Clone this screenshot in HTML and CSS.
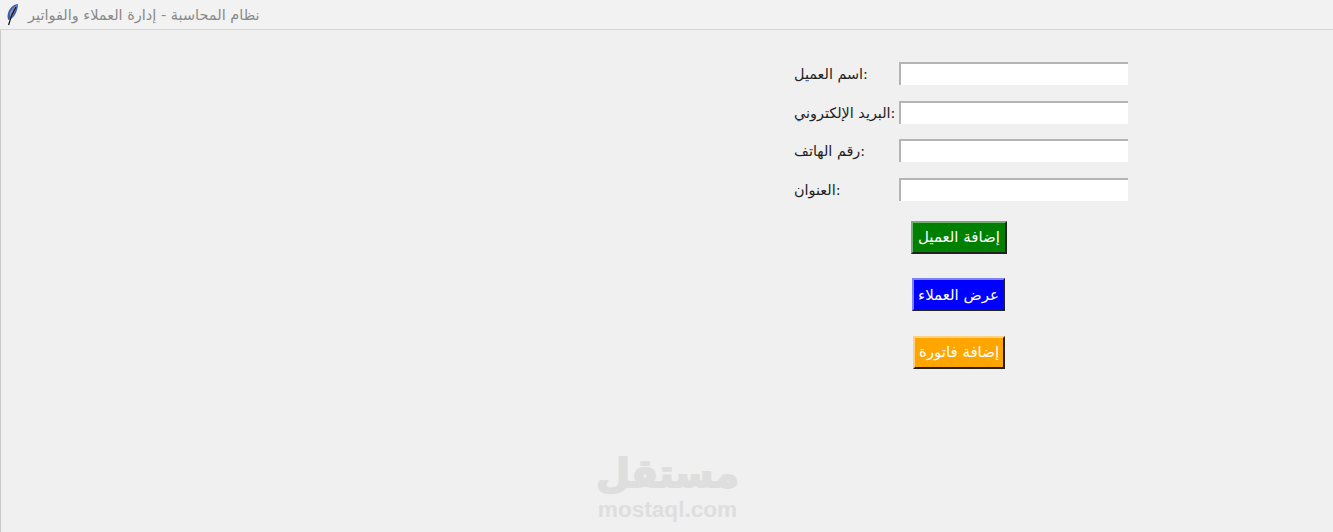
FILE: index.html
```html
<!DOCTYPE html>
<html lang="ar">
<head>
  <meta charset="UTF-8" />
  <title>نظام المحاسبة - إدارة العملاء والفواتير</title>
  <link rel="stylesheet" href="styles.css">
</head>
<body>

<div id="title-bar">
  <svg class="feather" width="14" height="24" viewBox="0 0 14 24">
    <path d="M12.8 1 C9 1.5 5 4.5 3.3 9 C2.3 12 2.3 15 3.3 17 C6.5 16.5 9.8 13 11.3 9 C12.5 6 13.2 3 12.8 1 Z" fill="#3d5f9e"/>
    <path d="M12 2 C9 3.5 6 6.5 4.5 10.5 L5.5 14.5 C8.8 12 11 6.5 12 2 Z" fill="#6f97dd"/>
    <path d="M9.5 5 L7.5 7.5 M8 9 L6 11.5" fill="none" stroke="#b04a6a" stroke-width="1"/>
    <path d="M11 4 C8.5 8 5.5 14 3.6 22" fill="none" stroke="#16161c" stroke-width="1.3"/>
  </svg>
  <span class="window-title" dir="rtl">نظام المحاسبة - إدارة العملاء والفواتير</span>
</div>

<div id="window-body">
  <div id="form-area">
    <div class="field-row">
      <label class="field-label">اسم العميل:</label>
      <input class="field-input" type="text">
    </div>
    <div class="field-row">
      <label class="field-label">البريد الإلكتروني:</label>
      <input class="field-input" type="text">
    </div>
    <div class="field-row">
      <label class="field-label">رقم الهاتف:</label>
      <input class="field-input" type="text">
    </div>
    <div class="field-row">
      <label class="field-label">العنوان:</label>
      <input class="field-input" type="text">
    </div>

    <div id="actions">
      <button class="action-btn btn-green">إضافة العميل</button>
      <button class="action-btn btn-blue">عرض العملاء</button>
      <button class="action-btn btn-orange">إضافة فاتورة</button>
    </div>
  </div>

  <div id="watermark">
    <div class="mark-ar">مستقل</div>
    <div class="mark-en">mostaql.com</div>
  </div>
</div>

</body>
</html>
```

FILE: styles.css
```css
html, body {
  height: 100%;
}

body {
  margin: 0;
  overflow: hidden;
  background: #f0f0f0;
  font-family: 'DejaVu Sans', sans-serif;
  color: #222;
}

#title-bar {
  display: flex;
  align-items: center;
  gap: 9px;
  height: 29px;
  padding-left: 5px;
  background: #f2f2f2;
  border-bottom: 1px solid #d6d6d6;
}

.window-title {
  font-size: 14.5px;
  color: #8a8a8a;
}

#window-body {
  position: relative;
  height: 502px;
  border-left: 1px solid #c8c8c8;
}

#form-area {
  width: 334px;
  margin-left: 793px;
  padding-top: 32px;
}

.field-row {
  display: flex;
  align-items: center;
  height: 24px;
  margin-bottom: 14.6px;
}

.field-label {
  width: 105px;
  font-size: 14.4px;
  white-space: nowrap;
}

.field-input {
  align-self: flex-start;
  width: 229px;
  height: 23px;
  padding: 0;
  box-sizing: border-box;
  background: #fff;
  border: none;
  border-top: 2px solid #b4b4b4;
  border-left: 2px solid #b4b4b4;
  outline: none;
}

#actions {
  display: flex;
  flex-direction: column;
  align-items: center;
  gap: 24.6px;
  width: 120px;
  margin-left: 105px;
  margin-top: 19px;
}

.action-btn {
  height: 33px;
  padding: 0;
  font-family: inherit;
  font-size: 15px;
  color: #fff;
  border: 2px solid;
}

.btn-green {
  width: 96px;
  background: #008000;
  border-color: #70b070 #222 #222 #70b070;
}

.btn-blue {
  width: 93px;
  margin-right: 1px;
  background: #0000ff;
  border-color: #8080ff #222 #222 #8080ff;
}

.btn-orange {
  width: 92px;
  background: #ffa500;
  border-color: #ffd080 #222 #222 #ffd080;
}

#watermark {
  position: absolute;
  left: 595px;
  top: 421px;
  width: 143px;
  text-align: center;
  color: #dedede;
  font-weight: bold;
}

.mark-ar {
  font-size: 39px;
  line-height: 46px;
  -webkit-text-stroke: 2px #dedede;
}

.mark-en {
  font-family: 'Liberation Sans', sans-serif;
  font-size: 22.6px;
  line-height: 26px;
}
```
